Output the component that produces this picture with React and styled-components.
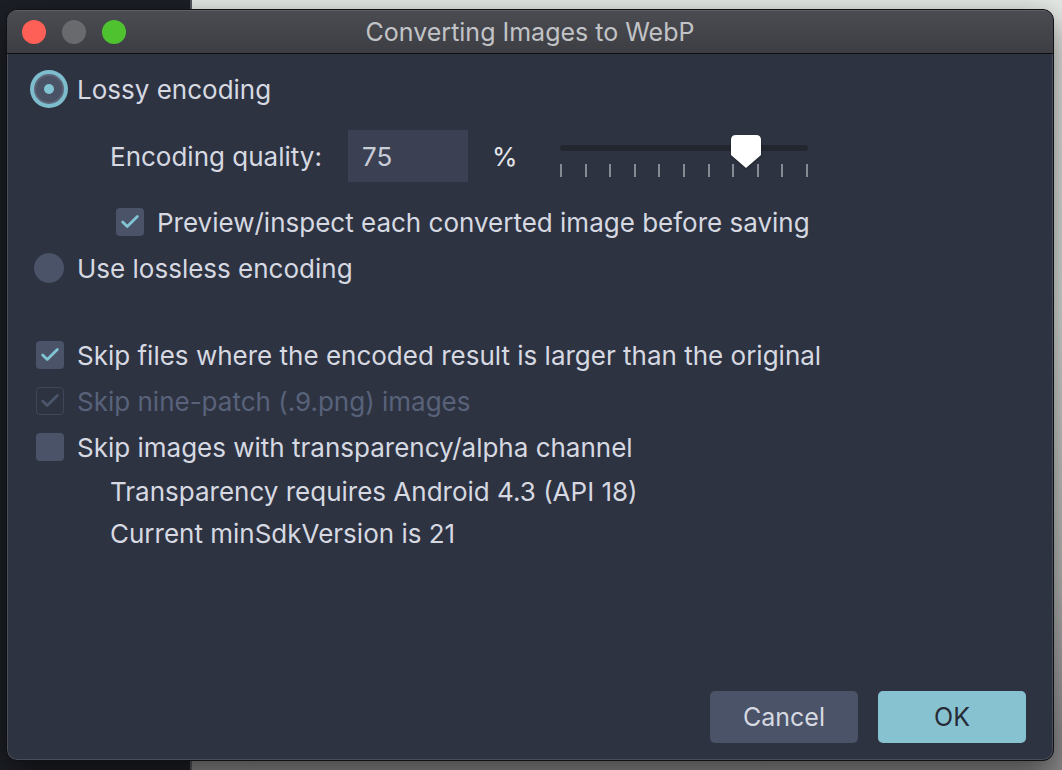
import React from "react";
import styled, { createGlobalStyle, css } from "styled-components";
import { Check } from "lucide-react";

const Global = createGlobalStyle`
  html, body { margin: 0; padding: 0; }
  body {
    width: 1062px;
    height: 770px;
    overflow: hidden;
    font-family: Inter, "Noto Sans", "Liberation Sans", sans-serif;
    -webkit-font-smoothing: antialiased;
  }
`;

const Desktop = styled.div`
  width: 1062px;
  height: 770px;
  box-sizing: border-box;
  padding: 9px 8px 9px 6px;
  background:
    linear-gradient(to right, #1c1f26 0 190px, #55575c 190px 192px, transparent 192px),
    linear-gradient(to bottom, #e6eae6 0%, #dde2dd 40%, #b9bbb9 75%, #8a8a8a 100%);
`;

const Window = styled.div`
  width: 1048px;
  height: 752px;
  box-sizing: border-box;
  display: flex;
  flex-direction: column;
  border: 1px solid #101114;
  border-radius: 11px;
  overflow: hidden;
  background: #2e3341;
  box-shadow: 0 12px 34px rgba(0, 0, 0, 0.55), inset 0 0 0 1px rgba(255, 255, 255, 0.13);
`;

const TitleBar = styled.div`
  height: 43px;
  flex: none;
  display: flex;
  align-items: center;
  position: relative;
  padding-left: 15px;
  background: linear-gradient(to bottom, #4a4c51 0%, #3c3e43 100%);
  border-bottom: 1px solid #0d0e10;
  box-shadow: inset 0 1px 0 rgba(255, 255, 255, 0.12);
`;

const Lights = styled.div`
  display: flex;
  gap: 16px;
`;

const Light = styled.span`
  width: 24px;
  height: 24px;
  border-radius: 50%;
  background: ${(p) => p.$color};
`;

const Title = styled.div`
  position: absolute;
  left: 0;
  right: 0;
  text-align: center;
  color: #c2c3c6;
  font-size: 25px;
  pointer-events: none;
`;

const Body = styled.div`
  flex: 1;
  display: flex;
  flex-direction: column;
  padding: 12px 27px 17px 27px;
  color: #d6d9e1;
  font-size: 26px;
`;

const Row = styled.div`
  display: flex;
  align-items: center;
  height: ${(p) => p.$h || 46}px;
  margin-top: ${(p) => p.$mt || 0}px;
  padding-left: ${(p) => p.$indent || 0}px;
  gap: ${(p) => (p.$gap ?? 13)}px;
`;

const Label = styled.span`
  color: ${(p) => (p.$disabled ? "#58627a" : "#d6d9e1")};
  white-space: nowrap;
`;

const Radio = styled.span`
  width: 30px;
  height: 30px;
  box-sizing: border-box;
  border-radius: 50%;
  flex: none;
  display: flex;
  align-items: center;
  justify-content: center;
  background: #4a5368;
  ${(p) =>
    p.$checked &&
    css`
      background: #4a5266;
      border: 2px solid #5c6478;
      box-shadow: 0 0 0 4px #7dbdcd;
    `}
`;

const Dot = styled.span`
  width: 10px;
  height: 10px;
  border-radius: 50%;
  background: #82c4d4;
`;

const Box = styled.span`
  width: 28px;
  height: 28px;
  box-sizing: border-box;
  border-radius: 4px;
  flex: none;
  display: flex;
  align-items: center;
  justify-content: center;
  background: ${(p) => (p.$disabled ? "transparent" : "#4a5368")};
  border: ${(p) => (p.$disabled ? "1.5px solid #3f4758" : "none")};
  color: ${(p) => (p.$disabled ? "#4c566a" : "#82c4d4")};
`;

const QualityLabel = styled.span`
  width: 213px;
  margin-right: 25px;
  white-space: nowrap;
`;

const NumberField = styled.div`
  width: 120px;
  height: 52px;
  box-sizing: border-box;
  padding-left: 14px;
  display: flex;
  align-items: center;
  background: #3b4152;
  color: #c9cdd7;
`;

const Percent = styled.span`
  margin-left: 24px;
  width: 22px;
  margin-right: 46px;
  color: #e4e6ec;
`;

const Slider = styled.div`
  position: relative;
  width: 248px;
  height: 44px;
`;

const Track = styled.div`
  position: absolute;
  left: 0;
  right: 0;
  top: 11px;
  height: 6px;
  border-radius: 3px;
  background: #22262f;
`;

const Ticks = styled.div`
  position: absolute;
  left: 0;
  right: 0;
  top: 30px;
  display: flex;
  justify-content: space-between;
`;

const Tick = styled.span`
  width: 2px;
  height: 13px;
  background: #868a93;
`;

const Thumb = styled.svg`
  position: absolute;
  top: 1px;
  transform: translateX(-50%);
  filter: drop-shadow(0 1px 1px rgba(0, 0, 0, 0.35));
`;

const Spacer = styled.div`
  flex: 1;
`;

const Buttons = styled.div`
  display: flex;
  justify-content: flex-end;
  gap: 20px;
`;

const Button = styled.button`
  width: 148px;
  height: 52px;
  border: none;
  border-radius: 5px;
  font-family: inherit;
  font-size: 25px;
  cursor: pointer;
  background: ${(p) => (p.$primary ? "#87c2d1" : "#4a5368")};
  color: ${(p) => (p.$primary ? "#272b36" : "#d6d9e1")};
`;

function CheckRow({ checked, disabled, children, mt, indent }) {
  return (
    <Row $mt={mt} $indent={indent}>
      <Box $disabled={disabled}>
        {checked && <Check size={22} strokeWidth={3} />}
      </Box>
      <Label $disabled={disabled}>{children}</Label>
    </Row>
  );
}

export default function App() {
  const value = 75;
  return (
    <>
      <Global />
      <Desktop>
        <Window>
          <TitleBar>
            <Lights>
              <Light $color="#fe5f57" />
              <Light $color="#696a6e" />
              <Light $color="#4fc22f" />
            </Lights>
            <Title>Converting Images to WebP</Title>
          </TitleBar>
          <Body>
            <Row>
              <Radio $checked>
                <Dot />
              </Radio>
              <Label>Lossy encoding</Label>
            </Row>
            <Row $h={52} $mt={18} $indent={76} $gap={0}>
              <QualityLabel>Encoding quality:</QualityLabel>
              <NumberField>{value}</NumberField>
              <Percent>%</Percent>
              <Slider>
                <Track />
                <Ticks>
                  {Array.from({ length: 11 }).map((_, i) => (
                    <Tick key={i} />
                  ))}
                </Ticks>
                <Thumb
                  style={{ left: `${value}%` }}
                  width="30"
                  height="34"
                  viewBox="0 0 30 34"
                >
                  <path
                    d="M5 0 H25 Q30 0 30 5 V20 L15 33 L0 20 V5 Q0 0 5 0 Z"
                    fill="#ffffff"
                  />
                </Thumb>
              </Slider>
            </Row>
            <CheckRow checked mt={17} indent={82}>
              Preview/inspect each converted image before saving
            </CheckRow>
            <Row>
              <Radio />
              <Label>Use lossless encoding</Label>
            </Row>
            <CheckRow checked mt={41} indent={2}>
              Skip files where the encoded result is larger than the original
            </CheckRow>
            <CheckRow checked disabled indent={2}>
              Skip nine-patch (.9.png) images
            </CheckRow>
            <CheckRow indent={2}>
              Skip images with transparency/alpha channel
            </CheckRow>
            <Row $h={42} $indent={76}>
              <Label>Transparency requires Android 4.3 (API 18)</Label>
            </Row>
            <Row $h={42} $indent={76}>
              <Label>Current minSdkVersion is 21</Label>
            </Row>
            <Spacer />
            <Buttons>
              <Button>Cancel</Button>
              <Button $primary>OK</Button>
            </Buttons>
          </Body>
        </Window>
      </Desktop>
    </>
  );
}
